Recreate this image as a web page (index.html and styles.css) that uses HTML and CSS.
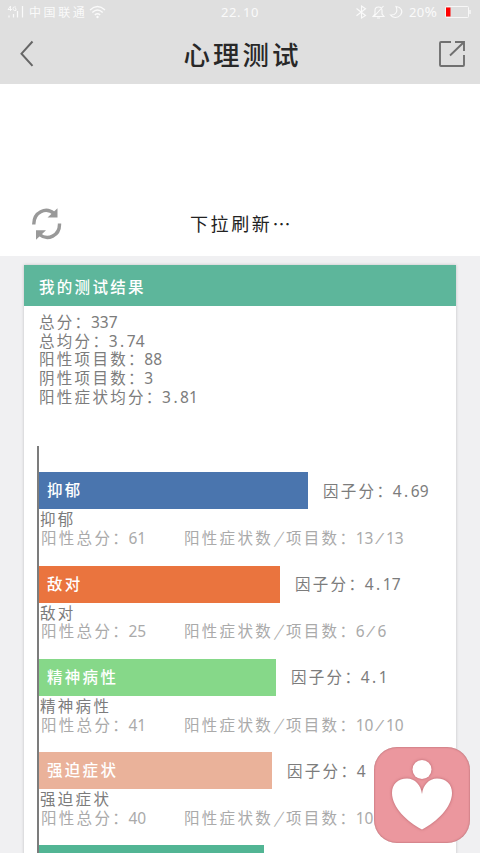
FILE: index.html
```html
<!DOCTYPE html>
<html lang="zh-CN">
<head>
<meta charset="utf-8">
<title>心理测试</title>
<link rel="stylesheet" href="styles.css">
</head>
<body>
<div class="screen">
  <header class="top">
    <div class="status">
      <svg class="signal" width="18" height="14" viewBox="0 0 18 14"><g fill="none" stroke="#fafafa"><path d="M3.500 1v5M3.500 1L1 4.500h4M9 2H7.200Q6 2 6 3.500T7.200 5.500H9V3.700H8" stroke-width=".9"/><path d="M2 10.500v2M6.500 9v3.500M10.500 6v6.500M15.500 1v11.500" stroke-width="1.200"/></g></svg>
      <span class="carrier">中国联通</span>
      <svg class="wifi" width="17" height="14" viewBox="0 0 17 14"><g fill="none" stroke="#fafafa" stroke-width="1.300"><path d="M1 5Q8.500-2 16 5M3.300 7.500Q8.500 2.500 13.700 7.500M5.800 10Q8.500 7.500 11.200 10"/></g><circle cx="8.500" cy="12" r="1.200" fill="#fafafa"/></svg>
      <span class="clock">22<i>.</i>10</span>
      <svg class="state" width="50" height="14" viewBox="0 0 50 14"><g fill="none" stroke="#fafafa" stroke-width="1.100"><path d="M1.500 3.500l9 7L6.500 13V1l4 2.800-9 7"/><path d="M18 11.500h11L27 9V5.500Q27 2 23.500 2T20 5.500V9zM22 13h3M28.500 1L18.500 12"/><path d="M41 1.500C46 2 48.500 6 45.500 10C42.500 13.500 37.500 13 35.500 10C40 10.500 43.500 7 41 1.500z"/></g></svg>
      <span class="percent">20<b>%</b></span>
      <svg class="battery" width="26" height="12" viewBox="0 0 26 12"><rect x=".5" y=".5" width="23" height="11" rx="1" fill="none" stroke="#f7f7f7"/><path d="M25 4v4" stroke="#f7f7f7" stroke-width="1.500"/><path d="M1 1.500h4.500v9H1z" fill="#f00"/></svg>
    </div>
    <div class="nav">
      <svg width="16" height="28" viewBox="0 0 16 28"><path d="M13.500 1.500L2.500 13.700l11 12.200" fill="none" stroke="#666" stroke-width="2"/></svg>
      <h1>心理测试</h1>
      <svg width="28" height="28" viewBox="0 0 28 28"><path d="M13 2H3Q2 2 2 3v22q0 1 1 1h22q1 0 1-1V15M17 2h9v9M26 2L12 15.500" fill="none" stroke="#707070" stroke-width="1.900"/></svg>
    </div>
  </header>

  <section class="pull">
    <svg width="30" height="32" viewBox="0 0 30 32"><g fill="none" stroke="#999" stroke-width="3.400"><path d="M1.800 16.500C1.500 4 14-1.500 22 5.500"/><path d="M27.500 15.500C28 28 15.500 33 7.500 26.500"/></g><path d="M25.500.300v9.200H15.500zM4 31.700V22.300h10z" fill="#999"/></svg>
    <p>下拉刷新<span>⋯</span></p>
  </section>

  <main class="card">
    <h2>我的测试结果</h2>
    <div class="summary">
      <p>总分：<span class="num">337</span></p>
      <p>总均分：<span class="num">3<i>.</i>74</span></p>
      <p>阳性项目数：<span class="num">88</span></p>
      <p>阴性项目数：<span class="num">3</span></p>
      <p>阳性症状均分：<span class="num">3<i>.</i>81</span></p>
    </div>
    <div class="chart">
      <article>
        <div class="line"><div class="bar blue">抑郁</div><p class="factor">因子分：<span class="num">4<i>.</i>69</span></p></div>
        <p class="name">抑郁</p>
        <div class="detail"><p>阳性总分：<span class="num">61</span></p><p>阳性症状数<i>/</i>项目数：<span class="num">13<i>/</i>13</span></p></div>
      </article>
      <article>
        <div class="line"><div class="bar orange">敌对</div><p class="factor">因子分：<span class="num">4<i>.</i>17</span></p></div>
        <p class="name">敌对</p>
        <div class="detail"><p>阳性总分：<span class="num">25</span></p><p>阳性症状数<i>/</i>项目数：<span class="num">6<i>/</i>6</span></p></div>
      </article>
      <article>
        <div class="line"><div class="bar green">精神病性</div><p class="factor">因子分：<span class="num">4<i>.</i>1</span></p></div>
        <p class="name">精神病性</p>
        <div class="detail"><p>阳性总分：<span class="num">41</span></p><p>阳性症状数<i>/</i>项目数：<span class="num">10<i>/</i>10</span></p></div>
      </article>
      <article>
        <div class="line"><div class="bar peach">强迫症状</div><p class="factor">因子分：<span class="num">4</span></p></div>
        <p class="name">强迫症状</p>
        <div class="detail"><p>阳性总分：<span class="num">40</span></p><p>阳性症状数<i>/</i>项目数：<span class="num">10</span></p></div>
      </article>
      <article>
        <div class="line"><div class="bar teal"></div></div>
      </article>
    </div>
  </main>

  <div class="float">
    <svg width="96" height="96" viewBox="0 0 96 96"><g fill="#fff"><circle cx="48" cy="22.500" r="9.500"/><path d="M48 47C47 38 41 31.500 33 31.500C24 31.500 18 37 18 46C18 60 33 75 48 82.500C63 75 78 60 78 46C78 37 72 31.500 63 31.500C55 31.500 49 38 48 47z"/></g></svg>
  </div>
</div>
</body>
</html>
```
FILE: styles.css
```css
* { box-sizing: border-box; }
body, h1, h2, p { margin: 0; }
i { font-style: normal; }
svg { display: block; flex: none; }
body { font-family: "Noto Sans CJK SC", sans-serif; }

.screen {
  position: relative;
  width: 480px;
  height: 853px;
  overflow: hidden;
  background: #f0f0f2;
}

.top { height: 84px; background: #dfdfdf; }
.status {
  display: flex;
  align-items: center;
  height: 24px;
  padding-left: 7px;
  color: #fafafa;
  font-size: 12px;
  line-height: 24px;
  white-space: nowrap;
}
.status span { flex: none; }
.carrier { width: 58px; margin-left: 4px; letter-spacing: 2.6px; }
.wifi { margin-left: 2px; }
.clock { width: 40px; margin-left: 115px; font: 13px/24px "Noto Sans", sans-serif; letter-spacing: .6px; }
.clock i { display: inline-block; width: 6px; }
.state { margin-left: 94px; }
.percent { width: 31px; margin-left: 4px; font: 13px/20px "Noto Sans", sans-serif; letter-spacing: .3px; }
.percent b { font-size: 15px; font-weight: 400; line-height: 1; }
.battery { margin-left: 5px; }

.nav {
  display: flex;
  align-items: center;
  justify-content: space-between;
  height: 60px;
  padding: 0 14px 0 19px;
}
.nav h1 {
  margin-left: 12px;
  color: #282828;
  font-size: 26.5px;
  font-weight: 500;
  line-height: 40px;
  letter-spacing: 3px;
}

.pull {
  display: flex;
  align-items: flex-end;
  height: 172px;
  padding: 0 0 16px 32px;
  background: #fff;
}
.pull p {
  display: flex;
  margin-left: 128px;
  color: #222;
  font-size: 18px;
  font-weight: 400;
  line-height: 34px;
  letter-spacing: 2.6px;
}
.pull p span { width: 18px; letter-spacing: 0; }

.card {
  width: 432px;
  height: 620px;
  margin: 9px auto 0;
  background: #fff;
  box-shadow: 0 0 3px rgba(0, 0, 0, .2);
  color: #7c7c7c;
  font-size: 15.5px;
  line-height: 18.7px;
  letter-spacing: 2.3px;
  white-space: nowrap;
}
.card h2 {
  height: 41px;
  padding-left: 15px;
  background: #5db69b;
  color: #fff;
  font-size: 15.5px;
  font-weight: 500;
  line-height: 43px;
  letter-spacing: 2.3px;
}
.card p { height: 18.7px; line-height: 18.7px; }
.summary { height: 140px; padding: 6px 0 0 15px; }

.num {
  margin-left: -1.5px;
  font-family: "Noto Sans", sans-serif;
  font-size: 15.5px;
  line-height: 1;
  letter-spacing: .1px;
}
.num i { display: inline-block; width: 9px; text-align: center; }

.chart {
  height: 439px;
  margin-left: 13px;
  padding-top: 26.300px;
  border-left: 2px solid #7c7c7c;
}
.chart article { height: 93.300px; }
.line { display: flex; align-items: center; height: 37px; }
.bar {
  height: 37px;
  padding-left: 8px;
  color: #fff;
  font-weight: 500;
  line-height: 35px;
}
.blue { width: 269px; background: #4a75ae; }
.orange { width: 241px; background: #ea743e; }
.green { width: 237px; background: #86d889; }
.peach { width: 233px; background: #eab29a; }
.teal { width: 225px; background: #52b594; }
.card .factor { height: 20px; margin-left: 15px; }
.name { padding-left: 1px; }
.detail { display: flex; padding-left: 2px; color: #aaa; }
.detail p:first-child { width: 143px; }
.detail i {
  display: inline-block;
  width: 13px;
  line-height: 1;
  text-align: center;
  letter-spacing: 0;
  transform: skewX(-18deg);
}
.detail .num { letter-spacing: -.2px; }

.float {
  position: absolute;
  left: 374px;
  top: 747px;
  width: 96px;
  height: 96px;
  border-radius: 23px;
  background: #eb979e;
  box-shadow: inset 0 0 2px rgba(110, 50, 55, .6);
}
.float svg { filter: drop-shadow(0 0 1.500px rgba(130, 50, 60, .5)); }
```
